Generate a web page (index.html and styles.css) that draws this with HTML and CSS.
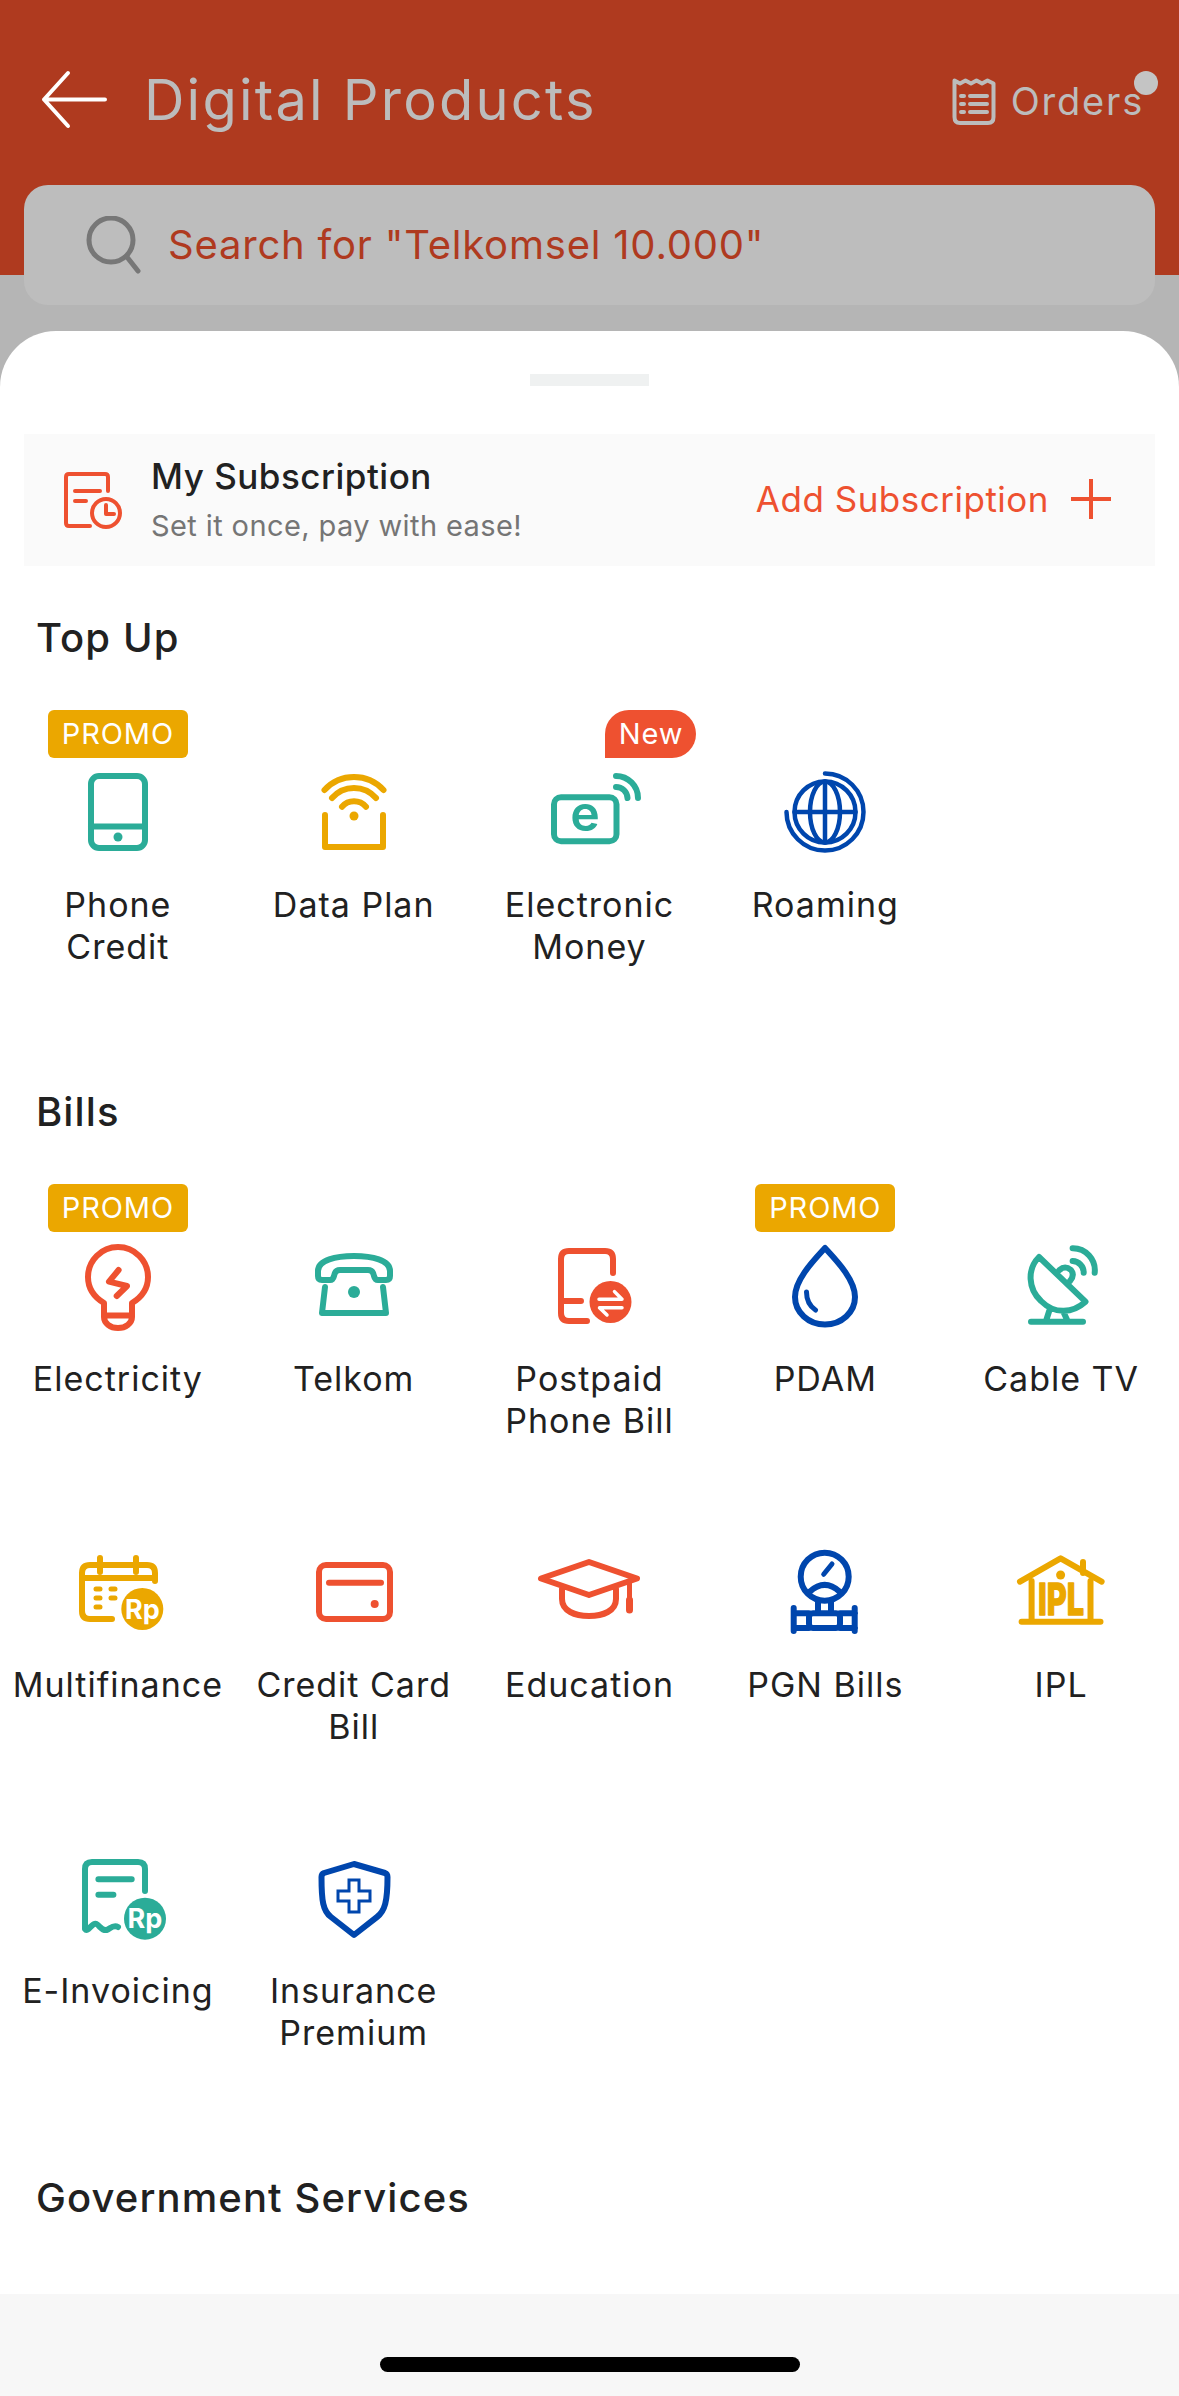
FILE: index.html
```html
<!DOCTYPE html>
<html lang="en">
<head>
<meta charset="utf-8">
<title>Digital Products</title>
<link rel="stylesheet" href="styles.css">
</head>
<body>
<div class="screen">
  <header class="header">
    <div class="nav">
      <svg class="back" width="66" height="60" viewBox="0 0 66 60"><path d="M27 3 3 29.5 27 56M3 29.5H64"/></svg>
      <h1 class="title">Digital Products</h1>
      <div class="orders">
        <svg class="orders-icon" width="44" height="48" viewBox="0 0 44 48"><path d="M2.500 3.500 8 6.500 13.500 3.500 19 6.500 24.500 3.500 30 6.500 35.500 3.500 41.500 6.500V40Q41.500 46 36 46H8Q2.500 46 2.500 40Z"/><path d="M9 19H12M18 19H35M9 27H12M18 27H35M9 35H12M18 35H35"/></svg>
        <span class="orders-text">Orders</span>
        <span class="orders-dot"></span>
      </div>
    </div>
    <div class="search">
      <svg class="search-icon" width="56" height="58" viewBox="0 0 56 58"><circle cx="25" cy="24" r="22"/><path d="M41 41 52 55"/></svg>
      <span class="search-text">Search for "Telkomsel 10.000"</span>
    </div>
  </header>

  <main class="sheet">
    <div class="handle"></div>
    <div class="subscription">
      <svg class="sub-icon" width="60" height="58" viewBox="0 0 60 58"><path d="M44 20V6Q44 3 41 3H5Q2 3 2 6V52Q2 55 5 55H26"/><path d="M11 20H36M11 30H22"/><circle cx="42" cy="42" r="14"/><path d="M42 34V43H50"/></svg>
      <div class="sub-copy">
        <div class="sub-title">My Subscription</div>
        <div class="sub-note">Set it once, pay with ease!</div>
      </div>
      <div class="sub-add">
        <span>Add Subscription</span>
        <svg class="sub-plus" width="42" height="42" viewBox="0 0 42 42"><path d="M21 1V41M1 21H41"/></svg>
      </div>
    </div>

    <section class="group">
      <h2 class="group-title">Top Up</h2>
      <div class="grid">
        <div class="tile">
          <span class="badge promo">PROMO</span>
          <svg class="icon teal" width="120" height="100" viewBox="0 0 120 100"><rect x="33" y="11" width="54" height="72" rx="8"/><path d="M33 61.500H87"/><circle class="solid" cx="60" cy="72" r="4.500"/></svg>
          <div class="label">Phone<br>Credit</div>
        </div>
        <div class="tile">
          <svg class="icon yellow" width="120" height="100" viewBox="0 0 120 100"><path d="M30.500 25A40 40 0 0 1 89.500 25M38 33A29 29 0 0 1 82 33M48 41.700A16 16 0 0 1 72 41.700M31 50V82H89V50"/><circle class="solid" cx="60" cy="51" r="4.500"/></svg>
          <div class="label">Data Plan</div>
        </div>
        <div class="tile">
          <span class="badge new">New</span>
          <svg class="icon teal" width="120" height="100" viewBox="0 0 120 100"><rect x="25" y="32.300" width="62.500" height="44" rx="7"/><path d="M87 11A22 22 0 0 1 109 33M87 22A11.500 11.500 0 0 1 98.500 33"/><text class="icon-letter" x="56" y="65.500" text-anchor="middle">e</text></svg>
          <div class="label">Electronic<br>Money</div>
        </div>
        <div class="tile">
          <svg class="icon blue thin" width="120" height="100" viewBox="0 0 120 100"><circle cx="60" cy="47" r="30.500"/><ellipse cx="60" cy="47" rx="15" ry="30.500"/><path d="M60 16.500V77.500M29.500 47H90.500M60 8.500A38.500 38.500 0 1 1 21.500 47"/></svg>
          <div class="label">Roaming</div>
        </div>
      </div>
    </section>

    <section class="group">
      <h2 class="group-title">Bills</h2>
      <div class="grid">
        <div class="tile">
          <span class="badge promo">PROMO</span>
          <svg class="icon orange" width="120" height="100" viewBox="0 0 120 100"><path d="M46 64C36 58 30 49 30 38A30 30 0 0 1 90 38C90 49 84 58 74 64V78A14 11 0 0 1 46 78ZM46 76.500H74M60.600 31 51 42.700 69 47 58.700 57"/></svg>
          <div class="label">Electricity</div>
        </div>
        <div class="tile">
          <svg class="icon teal" width="120" height="100" viewBox="0 0 120 100"><path d="M24 32C24 21 42 17 60 17C78 17 96 21 96 32V37Q96 41 92 41H84Q81 41 80 37Q79 31 74 31H46Q41 31 40 37Q39 41 36 41H28Q24 41 24 37ZM31 48 28 74H92L89 48"/><circle class="solid" cx="60" cy="53" r="6"/></svg>
          <div class="label">Telkom</div>
        </div>
        <div class="tile">
          <svg class="icon orange" width="120" height="100" viewBox="0 0 120 100"><path d="M84 34V20Q84 12 76 12H40Q32 12 32 20V74Q32 82 40 82H58M32 62H52"/><circle class="solid" cx="81.500" cy="63" r="21"/><path class="cut" d="M70 60.300H93L85.500 52.600M93 68.700H70.500L78 76"/></svg>
          <div class="label">Postpaid<br>Phone Bill</div>
        </div>
        <div class="tile">
          <span class="badge promo">PROMO</span>
          <svg class="icon blue" width="120" height="100" viewBox="0 0 120 100"><path d="M60 9C50 20 30 40 30 58A30 27.500 0 0 0 90 58C90 40 70 20 60 9Z"/><path class="fine" d="M41.500 53Q41.500 65 50.500 71"/></svg>
          <div class="label">PDAM</div>
        </div>
        <div class="tile">
          <svg class="icon teal" width="120" height="100" viewBox="0 0 120 100"><path d="M38 18C26 30 27 50 40 62C54 76 72 74 84.500 62.700ZM48.500 71 45 82M62 72 66.600 82M30 82.700H82M58.500 31Q64 26 70 31Q74 36 69 42M71.600 9.300A22 22 0 0 1 93.700 33.700M71.600 22A11.500 11.500 0 0 1 82.700 33.700"/></svg>
          <div class="label">Cable TV</div>
        </div>

        <div class="tile">
          <svg class="icon yellow" width="120" height="100" viewBox="0 0 120 100"><path d="M97 36V28Q97 20 89 20H32Q24 20 24 28V66Q24 74 32 74H54M42 13V27M78 13V27M24 33H97"/><path class="dots" d="M38 44H42M53 44H57M38 53H42M53 53H57M38 62H42"/><circle class="solid" cx="84.300" cy="64" r="21"/><text class="icon-rp" x="84.300" y="73.500" text-anchor="middle">Rp</text></svg>
          <div class="label">Multifinance</div>
        </div>
        <div class="tile">
          <svg class="icon orange" width="120" height="100" viewBox="0 0 120 100"><rect x="25" y="20" width="71" height="54" rx="7"/><path d="M35 37.700H87"/><circle class="solid" cx="80.700" cy="59" r="4"/></svg>
          <div class="label">Credit Card<br>Bill</div>
        </div>
        <div class="tile">
          <svg class="icon orange" width="120" height="100" viewBox="0 0 120 100"><path d="M60 17 108 33.500 60 50 12 33.500ZM33 44V54C33 66 46 71 60 71C74 71 87 66 87 54V44"/><path class="fine" d="M100.500 36V56"/><path class="tassel" d="M100.500 55V65"/></svg>
          <div class="label">Education</div>
        </div>
        <div class="tile">
          <svg class="icon blue" width="120" height="100" viewBox="0 0 120 100"><circle cx="59.700" cy="31.700" r="24"/><path class="fine" d="M58.700 29.300 67 19"/><path d="M44.700 46.700Q59.700 33 74.700 46.700M53 56V66M66 56V66M44 72Q44 68.300 48 68.300H71Q75 68.300 75 72V79Q75 83 71 83H48Q44 83 44 79ZM44 68.300H29M44 83H29M75 68.300H90M75 83H90M28.700 63V86M89.700 63V86"/></svg>
          <div class="label">PGN Bills</div>
        </div>
        <div class="tile">
          <svg class="icon yellow" width="120" height="100" viewBox="0 0 120 100"><path d="M19 36.700 59.600 13.300 100.600 36.700M82 17V28M30.600 36V76.700M89.500 36V76.700M20.600 76.700H99.500"/><circle class="solid" cx="59.600" cy="30" r="4.500"/><text class="icon-ipl" x="37" y="70" textLength="46" lengthAdjust="spacingAndGlyphs">IPL</text></svg>
          <div class="label">IPL</div>
        </div>

        <div class="tile">
          <svg class="icon teal" width="120" height="100" viewBox="0 0 120 100"><path d="M87 40V18Q87 11 80 11H34Q27 11 27 18V78C30 82 34 71 38.500 73C42 75 44 80 48.500 79C52 78 55 73 60 76M40.400 28.300H73.700M40.400 43.700H55.400"/><circle class="solid" cx="87" cy="67.700" r="21"/><text class="icon-rp" x="87" y="77" text-anchor="middle">Rp</text></svg>
          <div class="label">E-Invoicing</div>
        </div>
        <div class="tile">
          <svg class="icon blue" width="120" height="100" viewBox="0 0 120 100"><path d="M60 13 91 22Q93.500 23 93.500 26C93.500 50 91 60 83 66L60 84 37 66C29 60 27.500 50 27.500 26Q27.500 23 30 22Z"/><path class="hair" d="M55 29H65V40H76V50H65V61H55V50H44V40H55Z"/></svg>
          <div class="label">Insurance<br>Premium</div>
        </div>
      </div>
    </section>

    <section class="group">
      <h2 class="group-title">Government Services</h2>
    </section>
  </main>

  <footer class="footer"><div class="home-bar"></div></footer>
</div>
</body>
</html>
```

FILE: styles.css
```css
* { box-sizing: border-box; }
html, body { margin: 0; padding: 0; }
body { font-family: Inter, "Noto Sans", "Liberation Sans", sans-serif; color: #212121; }
h1, h2 { margin: 0; font-weight: 500; }

.screen {
  width: 1179px;
  height: 2396px;
  display: flex;
  flex-direction: column;
  background: #b5b5b5;
  overflow: hidden;
}

.header {
  height: 275px;
  flex: none;
  background: #af3a1f;
  padding: 70px 24px 0;
}
.nav { display: flex; align-items: center; height: 60px; margin-bottom: 55px; }
.back { flex: none; margin-left: 17px; fill: none; stroke: #fff; stroke-width: 4; stroke-linecap: round; stroke-linejoin: round; }
.title { margin-left: 37px; font-size: 56px; font-weight: 400; line-height: 60px; letter-spacing: 2.2px; color: #bcbcbc; }
.orders { position: relative; margin-left: auto; display: flex; align-items: center; margin-right: 11px; top: 1px; }
.orders-icon { flex: none; fill: none; stroke: #bcbcbc; stroke-width: 4; stroke-linecap: round; stroke-linejoin: round; }
.orders-text { margin-left: 15px; font-size: 38px; line-height: 46px; letter-spacing: 1.8px; color: #bcbcbc; }
.orders-dot { position: absolute; top: -6px; right: -14px; width: 24px; height: 24px; border-radius: 50%; background: #c4c4c4; }

.search {
  height: 120px;
  display: flex;
  align-items: center;
  padding-left: 62px;
  border-radius: 24px;
  background: #bdbdbd;
}
.search-icon { flex: none; fill: none; stroke: #777; stroke-width: 5; stroke-linecap: round; }
.search-text { margin-left: 26px; font-size: 40px; line-height: 46px; letter-spacing: .8px; color: #af3a1f; }

.sheet {
  flex: 1;
  min-height: 0;
  margin-top: 56px;
  padding-top: 43px;
  background: #fff;
  border-radius: 56px 56px 0 0;
  overflow: hidden;
}
.handle { width: 119px; height: 12px; margin: 0 auto 48px; background: #eff1f1; }

.subscription {
  height: 132px;
  margin: 0 24px;
  display: flex;
  align-items: center;
  padding: 0 43px 0 40px;
  background: #fafafa;
}
.sub-icon { flex: none; fill: none; stroke: #ee5130; stroke-width: 4; stroke-linecap: round; stroke-linejoin: round; }
.sub-copy { margin-left: 27px; margin-top: -3px; }
.sub-title { font-size: 35px; font-weight: 500; line-height: 44px; letter-spacing: .5px; color: #212121; }
.sub-note { margin-top: 10px; font-size: 29px; line-height: 36px; letter-spacing: .4px; color: #757575; }
.sub-add { margin-left: auto; margin-top: -2px; display: flex; align-items: center; gap: 21px; font-size: 35px; line-height: 44px; letter-spacing: .5px; color: #ee5130; }
.sub-plus { flex: none; fill: none; stroke: #ee5130; stroke-width: 4; }

.group { padding-top: 48px; }
.group + .group { padding-top: 73px; }
.group-title { padding-left: 36px; font-size: 40px; font-weight: 500; line-height: 48px; letter-spacing: 1.1px; color: #212121; }

.grid { display: grid; grid-template-columns: repeat(5, 1fr); grid-auto-rows: 306px; margin-top: 47px; }
.tile { position: relative; display: flex; flex-direction: column; align-items: center; padding-top: 56px; }
.label { margin-top: 19px; font-size: 34px; font-weight: 380; line-height: 41.500px; letter-spacing: 1px; text-align: center; color: #212121; white-space: nowrap; }

.badge {
  position: absolute;
  top: 1px;
  height: 48px;
  font-size: 29px;
  line-height: 47px;
  letter-spacing: .9px;
  color: #fff;
  text-align: center;
}
.promo { left: 50%; width: 140px; margin-left: -70px; border-radius: 6px; background: #eba700; }
.new { left: 50%; margin-left: 16px; width: 91px; border-radius: 24px 24px 24px 0; background: #ee5130; }

.icon { flex: none; fill: none; stroke: currentColor; stroke-width: 6; stroke-linecap: round; stroke-linejoin: round; }
.icon .solid { fill: currentColor; stroke: none; }
.icon .fine { stroke-width: 5; }
.icon .hair { stroke-width: 3; stroke-linecap: butt; stroke-linejoin: miter; }
.icon .tassel { stroke-width: 7; }
.icon .dots { stroke-width: 5; }
.icon .cut { stroke: #fff; stroke-width: 3.500; }
.thin { stroke-width: 4.500; }
.teal { color: #2bac98; }
.yellow { color: #eba700; }
.orange { color: #ee5130; }
.blue { color: #0046ad; }

.icon-letter { fill: currentColor; stroke: none; font-family: Inter, sans-serif; font-size: 50px; font-weight: 600; }
.icon-rp { fill: #fff; stroke: none; font-family: Inter, sans-serif; font-size: 27px; font-weight: 700; }
.icon-ipl { fill: currentColor; stroke: currentColor; stroke-width: 1.500; font-family: Inter, sans-serif; font-size: 44px; font-weight: 800; }

.footer {
  height: 102px;
  flex: none;
  display: flex;
  justify-content: center;
  padding-top: 63px;
  background: #f7f7f7;
}
.home-bar { width: 420px; height: 15px; border-radius: 8px; background: #000; }
```
